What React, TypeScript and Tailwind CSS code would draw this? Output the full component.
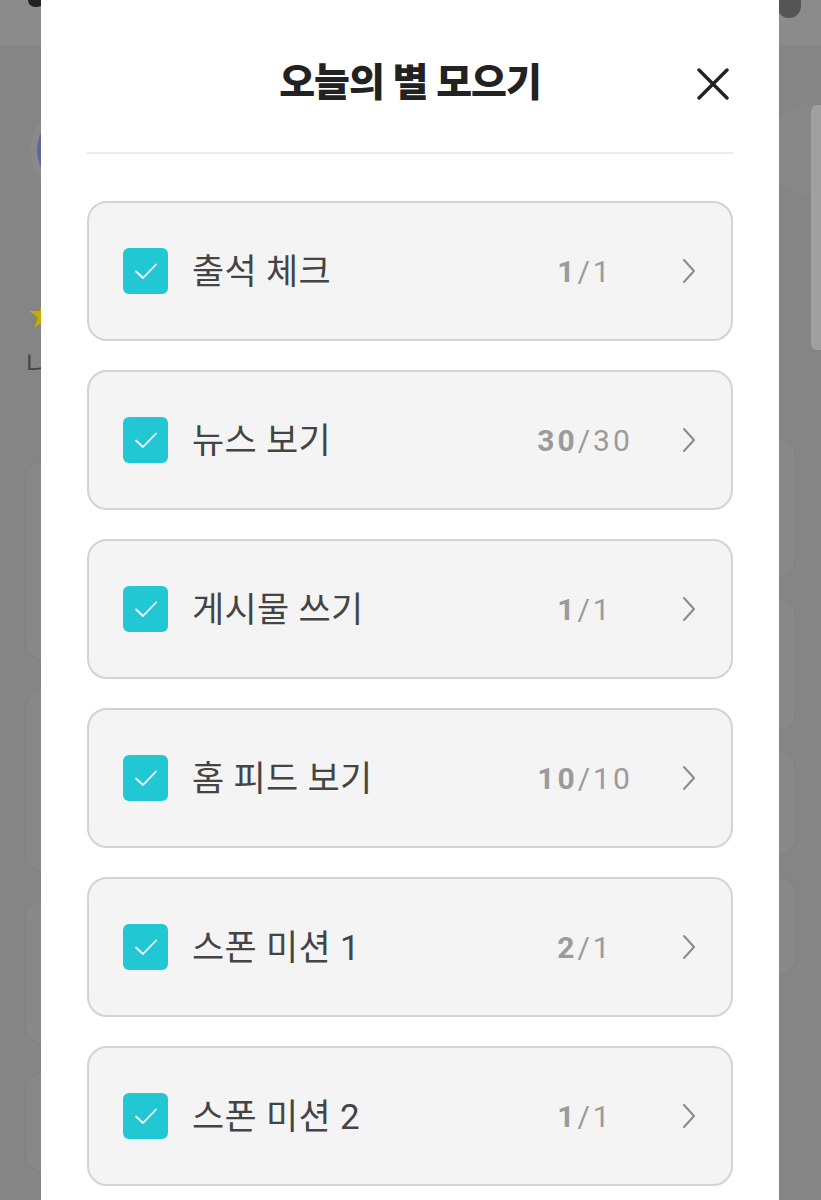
import React from 'react';

type Mission = { label: string; done: string; total: string };

const missions: Mission[] = [
  { label: '출석 체크', done: '1', total: '1' },
  { label: '뉴스 보기', done: '30', total: '30' },
  { label: '게시물 쓰기', done: '1', total: '1' },
  { label: '홈 피드 보기', done: '10', total: '10' },
  { label: '스폰 미션 1', done: '2', total: '1' },
  { label: '스폰 미션 2', done: '1', total: '1' },
];

const font = { fontFamily: 'Roboto, "Noto Sans CJK KR", sans-serif' };

const CheckBox = () => (
  <div className="w-[45px] h-[46px] rounded-[6px] bg-[#22c7d4] flex items-center justify-center shrink-0">
    <svg width="26" height="20" viewBox="0 0 26 20" fill="none">
      <path d="M3 10.5 L10 17 L23 3.5" stroke="white" strokeWidth="1.8" strokeLinecap="round" strokeLinejoin="round" />
    </svg>
  </div>
);

const MissionCard = ({ m }: { m: Mission }) => (
  <div className="h-[140px] rounded-[20px] border-2 border-[#d3d3d3] bg-[#f4f4f4] flex items-center pl-[34px] pr-[34px]">
    <CheckBox />
    <span className="ml-[24px] mt-[4px] text-[35px] font-normal text-[#444] tracking-[0.3px] flex-1">{m.label}</span>
    <span className="text-[30px] text-[#9b9b9b] tracking-[3px] w-[120px] text-center mr-[36px]">
      <span className="font-bold">{m.done}</span>/{m.total}
    </span>
    <svg width="16" height="26" viewBox="0 0 16 26" fill="none">
      <path d="M3 2 L13 13 L3 24" stroke="#8a8a8a" strokeWidth="2" strokeLinecap="round" strokeLinejoin="round" />
    </svg>
  </div>
);

export default function App() {
  return (
    <div className="relative w-[821px] h-[1200px] overflow-hidden bg-[#858585]" style={font}>
      {/* page behind the dimmed overlay */}
      <div className="h-[45px] bg-[#8b8b8b] flex justify-between px-[28px]">
        <div className="w-[16px] h-[7px] rounded-b-full bg-[#222]" />
        <div className="w-[24px] h-[18px] rounded-b-full bg-[#555] mr-[-8px]" />
      </div>
      <div className="absolute right-0 top-[105px] w-[10px] h-[245px] rounded-l-[6px] bg-[#a0a0a0]" />
      <div className="px-[25px] pt-[60px] flex justify-between">
        <div className="w-[100px] h-[90px] rounded-full bg-[#5c6a9a] ml-[6px] border-[6px] border-[#8a8a8a]" />
        <div className="w-[100px] h-[90px] rounded-full bg-[#878787] mr-[-70px] border border-[#8b8b8b]" />
      </div>
      <div className="px-[28px] mt-[105px] text-[#c9ab00] text-[30px] leading-none">★</div>
      <div className="px-[26px] mt-[22px] text-[26px] text-[#444] leading-none">나</div>
      <div className="px-[25px] mt-[83px] flex justify-between">
        <div className="w-[60px] flex flex-col gap-[29px]">
          {[200, 181, 144, 100].map((h, i) => (
            <div key={i} className="rounded-[18px] border border-[#808080] bg-[#888888]" style={{ height: h }} />
          ))}
        </div>
        <div className="w-[60px] -mt-[23px] flex flex-col gap-[20px]">
          {[140, 133, 105, 100].map((h, i) => (
            <div key={i} className="rounded-[18px] border border-[#808080] bg-[#888888]" style={{ height: h }} />
          ))}
        </div>
      </div>

      {/* modal */}
      <div className="absolute left-[41px] top-[-30px] w-[738px] h-[1260px] bg-white rounded-t-[28px] px-[46px]">
        <div className="relative h-[184px] border-b-2 border-[#ececec] flex items-center justify-center pt-[44px]">
          <h1 className="text-[39px] font-black text-[#222] tracking-[-1px]">오늘의 별 모으기</h1>
          <button className="absolute right-[4px] top-[98px]">
            <svg width="32" height="32" viewBox="0 0 32 32" fill="none">
              <path d="M2 2 L30 30 M30 2 L2 30" stroke="#222" strokeWidth="3.4" strokeLinecap="round" />
            </svg>
          </button>
        </div>
        <div className="mt-[47px] flex flex-col gap-[29px]">
          {missions.map((m) => (
            <MissionCard key={m.label} m={m} />
          ))}
        </div>
      </div>
    </div>
  );
}
